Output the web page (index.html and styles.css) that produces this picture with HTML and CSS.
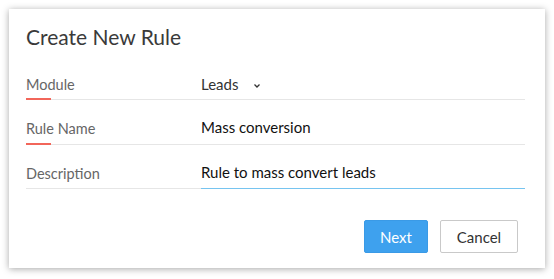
FILE: index.html
```html
<!DOCTYPE html>
<html lang="en">
<head>
  <meta charset="UTF-8">
  <title>Create New Rule</title>
  <link rel="stylesheet" href="styles.css">
</head>
<body>
  <div class="dialog">
    <h1 class="title">Create New Rule</h1>

    <div class="field">
      <div class="label required">Module</div>
      <div class="value">
        <span>Leads</span>
        <svg class="chevron" width="8" height="6" viewBox="0 0 8 6">
          <path d="M1.5 1.5 L4 4 L6.5 1.5" fill="none" stroke="#333" stroke-width="1.3"/>
        </svg>
      </div>
    </div>

    <div class="field">
      <div class="label required">Rule Name</div>
      <div class="value strong">Mass conversion</div>
    </div>

    <div class="field">
      <div class="label">Description</div>
      <div class="value strong active">Rule to mass convert leads</div>
    </div>

    <div class="actions">
      <button class="btn btn-primary">Next</button>
      <button class="btn btn-default">Cancel</button>
    </div>
  </div>
</body>
</html>
```

FILE: styles.css
```css
body {
  margin: 0;
  padding: 9px;
  background: #fff;
  font-family: Lato, "Open Sans", sans-serif;
  color: #333;
}
.dialog {
  width: 536px;
  height: 259px;
  box-sizing: border-box;
  padding: 15px 20px 0 17px;
  background: #fff;
  box-shadow: 0 1px 7px rgba(0, 0, 0, 0.35);
}
.title {
  margin: 0 0 6px;
  font-size: 21px;
  font-weight: 400;
  line-height: 26px;
  color: #3a3a3a;
}
.field {
  display: flex;
  height: 44px;
  align-items: stretch;
  width: 499px;
}
.field + .field {
  height: 44.5px;
}
.label {
  position: relative;
  width: 175px;
  padding-top: 20px;
  font-size: 14.5px;
  color: #666;
  border-bottom: 1px solid #e6e6e6;
}
.label.required::after {
  content: "";
  position: absolute;
  left: 0;
  bottom: -1px;
  width: 25px;
  height: 2px;
  background: #f2665a;
}
.value {
  flex: 1;
  padding-top: 19px;
  font-size: 15px;
  color: #333;
  border-bottom: 1px solid #e6e6e6;
}
.value.strong {
  color: #111;
  padding-top: 18px;
}
.value.active {
  border-bottom-color: #76c4f0;
}
.chevron {
  margin-left: 11px;
  vertical-align: middle;
}
.actions {
  display: flex;
  justify-content: flex-end;
  gap: 12px;
  margin-top: 31px;
  padding-right: 7px;
}
.btn {
  height: 33px;
  font-family: inherit;
  font-size: 15px;
  border-radius: 2px;
  cursor: pointer;
}
.btn-primary {
  width: 64px;
  background: #3ea1ee;
  color: #fff;
  border: 1px solid #3a9ae6;
}
.btn-default {
  width: 78px;
  background: #fff;
  color: #333;
  border: 1px solid #c9c9c9;
}
```
